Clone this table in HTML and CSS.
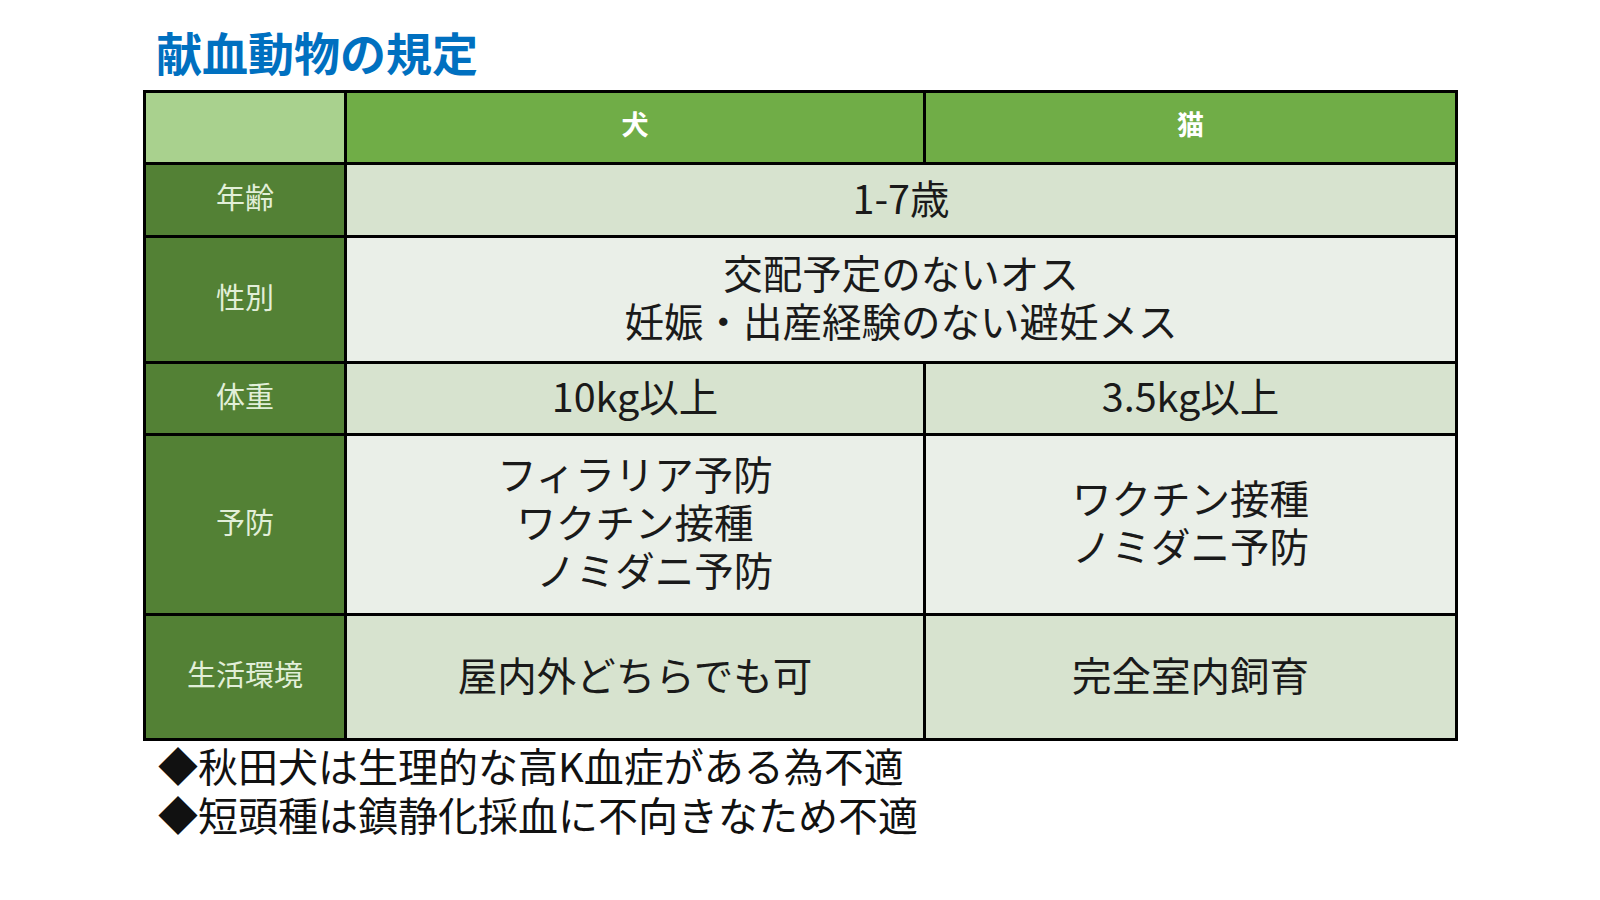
FILE: index.html
```html
<!DOCTYPE html>
<html lang="ja">
<head>
<meta charset="utf-8">
<link rel="stylesheet" href="styles.css">
</head>
<body>
<div class="slide">
  <h1 class="title">献血動物の規定</h1>
  <div class="table">
    <div class="cell corner"></div>
    <div class="cell head">犬</div>
    <div class="cell head">猫</div>

    <div class="cell label">年齢</div>
    <div class="cell data dark span2">1-7歳</div>

    <div class="cell label">性別</div>
    <div class="cell data light span2"><div class="lines"><span>交配予定のないオス</span><span>妊娠・出産経験のない避妊メス</span></div></div>

    <div class="cell label">体重</div>
    <div class="cell data dark">10kg以上</div>
    <div class="cell data dark">3.5kg以上</div>

    <div class="cell label">予防</div>
    <div class="cell data light"><div class="lines"><span>フィラリア予防</span><span>ワクチン接種</span><span class="shift">ノミダニ予防</span></div></div>
    <div class="cell data light"><div class="lines"><span>ワクチン接種</span><span>ノミダニ予防</span></div></div>

    <div class="cell label">生活環境</div>
    <div class="cell data dark">屋内外どちらでも可</div>
    <div class="cell data dark">完全室内飼育</div>
  </div>
  <ul class="notes">
    <li>◆秋田犬は生理的な高K血症がある為不適</li>
    <li>◆短頭種は鎮静化採血に不向きなため不適</li>
  </ul>
</div>
</body>
</html>
```

FILE: styles.css
```css
html, body {
  margin: 0;
  padding: 0;
  background: #ffffff;
}
body {
  font-family: "Noto Sans CJK JP", "Noto Sans", sans-serif;
  color: #1a1a1a;
}
.slide {
  width: 1600px;
  height: 900px;
  padding: 0 0 0 143px;
  box-sizing: border-box;
}
.title {
  margin: 0;
  padding: 28px 0 0 13px;
  height: 90px;
  box-sizing: border-box;
  font-size: 46px;
  line-height: 46px;
  font-weight: 700;
  color: #0070c0;
  white-space: nowrap;
}
.table {
  width: 1315px;
  display: grid;
  grid-template-columns: 198px 576px 529px;
  grid-template-rows: 69px 70px 123px 69px 177px 122px;
  gap: 3px;
  padding: 3px;
  background: #000000;
  box-sizing: border-box;
}
.cell {
  display: flex;
  align-items: center;
  justify-content: center;
  text-align: center;
  white-space: nowrap;
  padding-bottom: 8px;
  box-sizing: border-box;
}
.corner {
  background: #a9d18e;
}
.head {
  background: #70ad47;
  color: #ffffff;
  font-weight: 700;
  font-size: 27px;
}
.label {
  background: #538135;
  color: #e2efd9;
  font-size: 29px;
}
.data {
  font-size: 39.5px;
  color: #1a1a1a;
}
.dark {
  background: #d7e3cf;
}
.light {
  background: #eaefe8;
}
.span2 {
  grid-column: span 2;
}
.lines {
  display: flex;
  flex-direction: column;
  align-items: center;
  line-height: 48px;
}
.shift {
  padding-left: 1em;
}
.notes {
  list-style: none;
  margin: 0;
  padding: 0 0 0 15px;
  font-size: 40px;
  line-height: 49px;
  color: #111111;
  white-space: nowrap;
}
```
